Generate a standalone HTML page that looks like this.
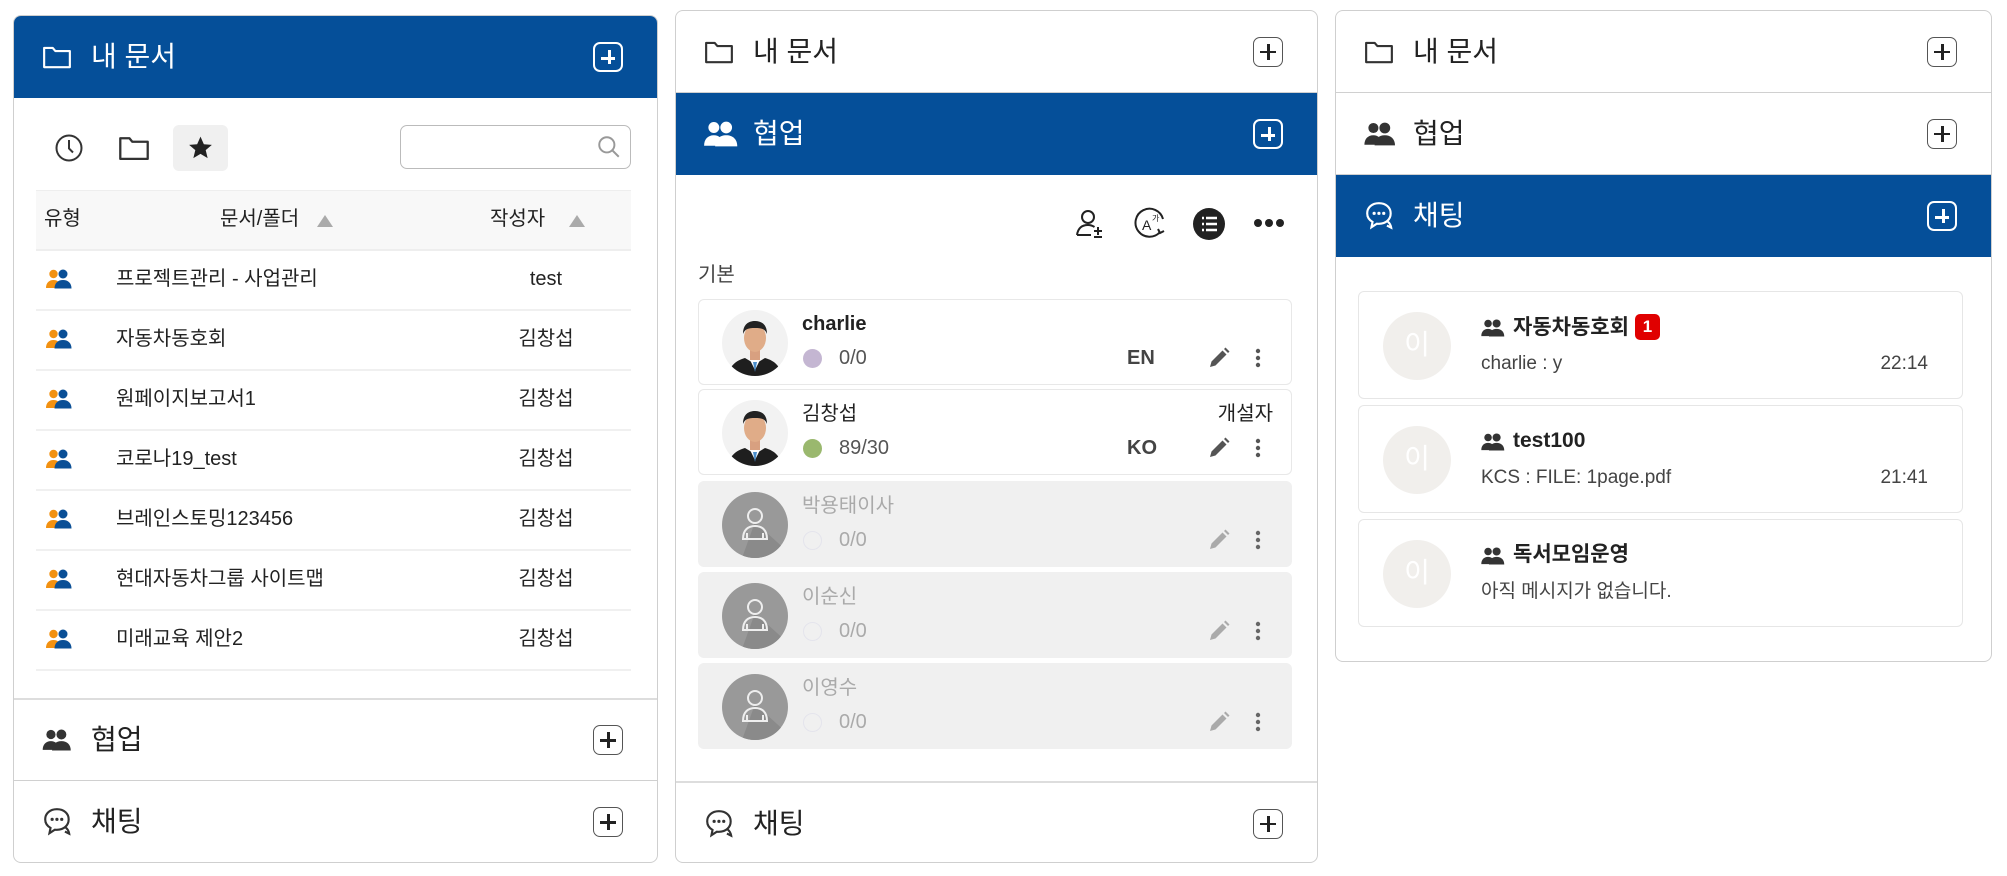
<!DOCTYPE html>
<html><head><meta charset="utf-8">
<style>
*{box-sizing:border-box;margin:0;padding:0}
body{width:2007px;height:876px;background:#fff;font-family:"Liberation Sans","Noto Sans CJK KR",sans-serif;color:#222;position:relative;overflow:hidden;line-height:1.2}
.a{position:absolute}
.panel{position:absolute;border:1px solid #cfcfcf;border-radius:8px;background:#fff;overflow:hidden}
.hdr{position:absolute;left:0;right:0;height:82px;border-bottom:1px solid #d0d0d0}
.hdr.blue{background:#054f99;color:#fff;border-bottom:none}
.hdr .t{position:absolute;left:77px;top:50%;transform:translateY(-50%);font-size:28px;line-height:1}
.hdr .ic{position:absolute;left:28px;top:50%;transform:translateY(-50%)}
.plus{position:absolute;right:34px;top:50%;transform:translateY(-50%);width:30px;height:30px;border:1.5px solid #555;border-radius:7px;background:#fff}
.plus:before{content:"";position:absolute;left:6px;right:6px;top:13px;height:2.5px;background:#222}
.plus:after{content:"";position:absolute;top:6px;bottom:6px;left:13px;width:2.5px;background:#222}
.blue .plus{background:transparent;border:2px solid #fff}
.blue .plus:before,.blue .plus:after{background:#fff}
.row{position:absolute;left:22px;width:595px;height:60px;border-bottom:2px solid #f0f0f0;font-size:20px}
.row .n{position:absolute;left:80px;top:16px}
.row .w{position:absolute;left:430px;width:160px;text-align:center;top:16px}
.row .gi{position:absolute;left:10px;top:18px}
.card{position:absolute;left:22px;width:594px;height:86px;border:1px solid #e8e8e8;border-radius:6px;background:#fff}
.card.g{background:#f0f0f0;border-color:#f0f0f0;color:#aaa}
.card .av{position:absolute;left:23px;top:10px;width:66px;height:66px;border-radius:50%;overflow:hidden}
.card .nm{position:absolute;left:103px;top:12px;font-size:20px}
.card .dot{position:absolute;left:104px;top:49px;width:19px;height:19px;border-radius:50%}
.card .sc{position:absolute;left:140px;top:46px;font-size:20px;color:#555}
.card.g .sc{color:#aaa}
.card .lang{position:absolute;left:428px;top:46px;font-size:20px;font-weight:bold;color:#444}
.card .pen{position:absolute;left:508px;top:46px}
.card .kb{position:absolute;left:555px;top:46px}
.chat{position:absolute;left:22px;width:605px;height:108px;border:1px solid #e6e6e6;border-radius:6px;background:#fff}
.chat .av{position:absolute;left:24px;top:20px;width:68px;height:68px;border-radius:50%;background:#f1efec;color:#fff;font-size:28px;text-align:center;line-height:66px}
.chat .ti{position:absolute;left:154px;top:22px;font-size:21px;font-weight:bold;color:#222}
.chat .gi{position:absolute;left:122px;top:27px}
.chat .sub{position:absolute;left:122px;top:61px;font-size:19px;color:#444}
.chat .tm{position:absolute;right:34px;top:61px;font-size:19px;color:#444}
</style></head><body>

<svg width="0" height="0" style="position:absolute">
<defs>
<symbol id="fold" viewBox="0 0 28 24"><path d="M2 3.5h8l2.5 3H26v15H2z" fill="none" stroke="currentColor" stroke-width="2" stroke-linejoin="round"/></symbol>
<symbol id="grp" viewBox="0 0 26 20"><circle cx="7.5" cy="5" r="4.2"/><path d="M0 19c0-5 3-8 7.5-8 2 0 3.5.6 4.5 1.5C10.5 14 10 16 10 19z"/><circle cx="17" cy="5" r="4.5"/><path d="M8.5 19.5c0-5.5 3.5-8.5 8.5-8.5s8.5 3 8.5 8.5z"/></symbol>
<symbol id="grpc" viewBox="0 0 26 20"><circle cx="7.5" cy="5" r="4.2" fill="#f29111"/><path d="M0 19c0-5 3-8 7.5-8 2 0 3.5.6 4.5 1.5C10.5 14 10 16 10 19z" fill="#f29111"/><circle cx="17" cy="5" r="4.5" fill="#0a4f96"/><path d="M8.5 19.5c0-5.5 3.5-8.5 8.5-8.5s8.5 3 8.5 8.5z" fill="#0a4f96"/></symbol>
<symbol id="chatic" viewBox="0 0 30 30"><path d="M14 3C7.5 3 3 7 3 12.5c0 3.5 2 6.3 5 8l-1 5 5-3.3c.7.1 1.3.1 2 .1 6.5 0 11-4.2 11-9.8S20.5 3 14 3z" fill="none" stroke="currentColor" stroke-width="2"/><path d="M22 20c2 1.5 3 3 3.5 6l-4-2" fill="none" stroke="currentColor" stroke-width="2"/><circle cx="9.5" cy="12.5" r="1.5" fill="currentColor"/><circle cx="14" cy="12.5" r="1.5" fill="currentColor"/><circle cx="18.5" cy="12.5" r="1.5" fill="currentColor"/></symbol>
<symbol id="pen" viewBox="0 0 24 24"><path d="M3 21l1.5-5.5L15.5 4.5l4 4L8.5 19.5z M17 3l1.5-1.5 4 4L21 7z"/></symbol>
<symbol id="kb" viewBox="0 0 8 24"><circle cx="4" cy="5" r="2.2"/><circle cx="4" cy="12" r="2.2"/><circle cx="4" cy="19" r="2.2"/></symbol>
<symbol id="ghost" viewBox="0 0 66 66"><rect width="66" height="66" fill="#999"/><path d="M33 30L66 60V66H20z" fill="#8a8a8a"/><circle cx="33" cy="24" r="7" fill="none" stroke="#eee" stroke-width="2"/><path d="M21 47c0-9 5-13 12-13s12 4 12 13z M21 47h24" fill="none" stroke="#eee" stroke-width="2"/><path d="M25 47v-6M41 47v-6" stroke="#eee" stroke-width="2"/></symbol>
<symbol id="photo" viewBox="0 0 66 66"><rect width="66" height="66" fill="#f2f2f2"/><path d="M6 66c2-12 10-16 17-18l10 6 10-6c7 2 15 6 17 18z" fill="#1e1e1e"/><path d="M27 48l6 12 6-12z" fill="#fff"/><path d="M31 52l2 10 2-10z" fill="#4a8ecc"/><rect x="28" y="38" width="10" height="12" fill="#d8a080"/><ellipse cx="33" cy="28" rx="11" ry="14" fill="#e0ac88"/><path d="M21 24c0-10 6-13 12-13s12 3 12 13c-2-5-5-6-12-6s-10 1-12 6z" fill="#222"/></symbol>
</defs></svg>

<!-- PANEL 1 -->
<div class="panel" style="left:13px;top:15px;width:645px;height:848px">
  <div class="hdr blue" style="top:0">
    <svg class="ic" width="30" height="26" style="color:#fff"><use href="#fold"/></svg>
    <div class="t">내 문서</div><div class="plus"></div>
  </div>
  <svg class="a" style="left:40px;top:117px" width="30" height="30" viewBox="0 0 30 30"><circle cx="15" cy="15" r="12.5" fill="none" stroke="#333" stroke-width="2"/><path d="M15 7v8.5l4 4" fill="none" stroke="#333" stroke-width="2"/></svg>
  <svg class="a" style="left:104px;top:118px;color:#333" width="32" height="28"><use href="#fold"/></svg>
  <div class="a" style="left:159px;top:109px;width:55px;height:46px;background:#f0f0f0;border-radius:6px"></div>
  <svg class="a" style="left:173px;top:119px" width="27" height="26" viewBox="0 0 24 24"><path d="M12 1.5l3.1 7 7.4.6-5.7 4.9 1.8 7.4L12 17.4l-6.6 4 1.8-7.4L1.5 9.1l7.4-.6z" fill="#222"/></svg>
  <div class="a" style="left:386px;top:109px;width:231px;height:44px;border:1px solid #bbb;border-radius:7px"></div>
  <svg class="a" style="left:582px;top:118px" width="26" height="26" viewBox="0 0 24 24"><circle cx="10" cy="10" r="7" fill="none" stroke="#999" stroke-width="1.8"/><path d="M15 15l6 6" stroke="#999" stroke-width="1.8"/></svg>
  <div class="a" style="left:22px;top:174px;width:595px;height:61px;background:#f8f8f8;border-top:1px solid #eee;border-bottom:2px solid #eee;font-size:20px">
    <div class="a" style="left:8px;top:16px">유형</div>
    <div class="a" style="left:184px;top:16px">문서/폴더</div>
    <svg class="a" style="left:281px;top:24px" width="16" height="12"><path d="M0 12L8 0l8 12z" fill="#aaa"/></svg>
    <div class="a" style="left:454px;top:16px">작성자</div>
    <svg class="a" style="left:533px;top:24px" width="16" height="12"><path d="M0 12L8 0l8 12z" fill="#aaa"/></svg>
  </div>
  <div class="row" style="top:235px"><svg class="gi" width="26" height="20"><use href="#grpc"/></svg><div class="n">프로젝트관리 - 사업관리</div><div class="w">test</div></div>
  <div class="row" style="top:295px"><svg class="gi" width="26" height="20"><use href="#grpc"/></svg><div class="n">자동차동호회</div><div class="w">김창섭</div></div>
  <div class="row" style="top:355px"><svg class="gi" width="26" height="20"><use href="#grpc"/></svg><div class="n">원페이지보고서1</div><div class="w">김창섭</div></div>
  <div class="row" style="top:415px"><svg class="gi" width="26" height="20"><use href="#grpc"/></svg><div class="n">코로나19_test</div><div class="w">김창섭</div></div>
  <div class="row" style="top:475px"><svg class="gi" width="26" height="20"><use href="#grpc"/></svg><div class="n">브레인스토밍123456</div><div class="w">김창섭</div></div>
  <div class="row" style="top:535px"><svg class="gi" width="26" height="20"><use href="#grpc"/></svg><div class="n">현대자동차그룹 사이트맵</div><div class="w">김창섭</div></div>
  <div class="row" style="top:595px"><svg class="gi" width="26" height="20"><use href="#grpc"/></svg><div class="n">미래교육 제안2</div><div class="w">김창섭</div></div>
  <div class="hdr" style="top:682px;border-top:2px solid #ddd;height:83px">
    <svg class="ic" width="30" height="22" style="fill:#333"><use href="#grp"/></svg>
    <div class="t">협업</div><div class="plus"></div>
  </div>
  <div class="hdr" style="top:765px;border-bottom:none">
    <svg class="ic" width="32" height="32" style="color:#333"><use href="#chatic"/></svg>
    <div class="t">채팅</div><div class="plus"></div>
  </div>
</div>

<!-- PANEL 2 -->
<div class="panel" style="left:675px;top:10px;width:643px;height:853px">
  <div class="hdr" style="top:0">
    <svg class="ic" width="30" height="26" style="color:#333"><use href="#fold"/></svg>
    <div class="t">내 문서</div><div class="plus"></div>
  </div>
  <div class="hdr blue" style="top:82px">
    <svg class="ic" width="34" height="26" style="fill:#fff"><use href="#grp"/></svg>
    <div class="t">협업</div><div class="plus"></div>
  </div>
  <svg class="a" style="left:398px;top:197px" width="32" height="32" viewBox="0 0 32 32"><circle cx="14" cy="9" r="6" fill="none" stroke="#222" stroke-width="2"/><path d="M3 27c1-7 5-10 11-10 3 0 5 1 6.5 2 M3 27h14" fill="none" stroke="#222" stroke-width="2"/><path d="M24 19v8M20 23h8M20 29h8" stroke="#222" stroke-width="2"/></svg>
  <svg class="a" style="left:457px;top:196px" width="34" height="34" viewBox="0 0 34 34"><path d="M27 25A14 14 0 1 1 30 12" fill="none" stroke="#222" stroke-width="2"/><path d="M25 22l2 4 4-2" fill="none" stroke="#222" stroke-width="2"/><text x="9" y="23" font-size="14" font-family="Liberation Sans" fill="#222">A</text><text x="19" y="14" font-size="8" font-family="Noto Sans CJK KR" fill="#222">가</text></svg>
  <svg class="a" style="left:516px;top:196px" width="34" height="34" viewBox="0 0 34 34"><circle cx="17" cy="17" r="16" fill="#222"/><path d="M10 11h2M10 17h2M10 23h2M14 11h11M14 17h11M14 23h11" stroke="#fff" stroke-width="2.6"/></svg>
  <svg class="a" style="left:577px;top:205px" width="32" height="14"><circle cx="5" cy="7" r="4" fill="#222"/><circle cx="16" cy="7" r="4" fill="#222"/><circle cx="27" cy="7" r="4" fill="#222"/></svg>
  <div class="a" style="left:22px;top:252px;font-size:20px;color:#444">기본</div>
  <div class="card" style="top:288px"><svg class="av" viewBox="0 0 66 66"><use href="#photo"/></svg><div class="nm" style="font-weight:bold">charlie</div><div class="dot" style="background:#c4b6d2"></div><div class="sc">0/0</div><div class="lang">EN</div><svg class="pen" width="24" height="24" style="fill:#555"><use href="#pen"/></svg><svg class="kb" width="8" height="24" style="fill:#555"><use href="#kb"/></svg></div>
  <div class="card" style="top:378px"><svg class="av" viewBox="0 0 66 66"><use href="#photo"/></svg><div class="nm">김창섭</div><div class="a" style="right:18px;top:12px;font-size:20px">개설자</div><div class="dot" style="background:#9ab86e"></div><div class="sc">89/30</div><div class="lang">KO</div><svg class="pen" width="24" height="24" style="fill:#555"><use href="#pen"/></svg><svg class="kb" width="8" height="24" style="fill:#555"><use href="#kb"/></svg></div>
  <div class="card g" style="top:470px"><svg class="av" viewBox="0 0 66 66"><use href="#ghost"/></svg><div class="nm">박용태이사</div><div class="dot" style="border:1px solid #e4e4ec"></div><div class="sc">0/0</div><svg class="pen" width="24" height="24" style="fill:#aaa"><use href="#pen"/></svg><svg class="kb" width="8" height="24" style="fill:#666"><use href="#kb"/></svg></div>
  <div class="card g" style="top:561px"><svg class="av" viewBox="0 0 66 66"><use href="#ghost"/></svg><div class="nm">이순신</div><div class="dot" style="border:1px solid #e4e4ec"></div><div class="sc">0/0</div><svg class="pen" width="24" height="24" style="fill:#aaa"><use href="#pen"/></svg><svg class="kb" width="8" height="24" style="fill:#666"><use href="#kb"/></svg></div>
  <div class="card g" style="top:652px"><svg class="av" viewBox="0 0 66 66"><use href="#ghost"/></svg><div class="nm">이영수</div><div class="dot" style="border:1px solid #e4e4ec"></div><div class="sc">0/0</div><svg class="pen" width="24" height="24" style="fill:#aaa"><use href="#pen"/></svg><svg class="kb" width="8" height="24" style="fill:#666"><use href="#kb"/></svg></div>
  <div class="hdr" style="top:770px;border-top:2px solid #ddd;border-bottom:none;height:83px">
    <svg class="ic" width="32" height="32" style="color:#333"><use href="#chatic"/></svg>
    <div class="t">채팅</div><div class="plus"></div>
  </div>
</div>

<!-- PANEL 3 -->
<div class="panel" style="left:1335px;top:10px;width:657px;height:652px">
  <div class="hdr" style="top:0">
    <svg class="ic" width="30" height="26" style="color:#333"><use href="#fold"/></svg>
    <div class="t">내 문서</div><div class="plus"></div>
  </div>
  <div class="hdr" style="top:82px">
    <svg class="ic" width="32" height="24" style="fill:#333"><use href="#grp"/></svg>
    <div class="t">협업</div><div class="plus"></div>
  </div>
  <div class="hdr blue" style="top:164px">
    <svg class="ic" width="32" height="32" style="color:#fff"><use href="#chatic"/></svg>
    <div class="t">채팅</div><div class="plus"></div>
  </div>
  <div class="chat" style="top:280px"><div class="av">이</div><svg class="gi" width="24" height="18" style="fill:#333"><use href="#grp"/></svg><div class="ti">자동차동호회 <span style="display:inline-block;background:#e00000;color:#fff;border-radius:5px;font-size:17px;padding:3px 8px;vertical-align:2px;line-height:1.2">1</span></div><div class="sub">charlie : y</div><div class="tm">22:14</div></div>
  <div class="chat" style="top:394px"><div class="av">이</div><svg class="gi" width="24" height="18" style="fill:#333"><use href="#grp"/></svg><div class="ti">test100</div><div class="sub">KCS : FILE: 1page.pdf</div><div class="tm">21:41</div></div>
  <div class="chat" style="top:508px"><div class="av">이</div><svg class="gi" width="24" height="18" style="fill:#333"><use href="#grp"/></svg><div class="ti">독서모임운영</div><div class="sub">아직 메시지가 없습니다.</div></div>
</div>
</body></html>
